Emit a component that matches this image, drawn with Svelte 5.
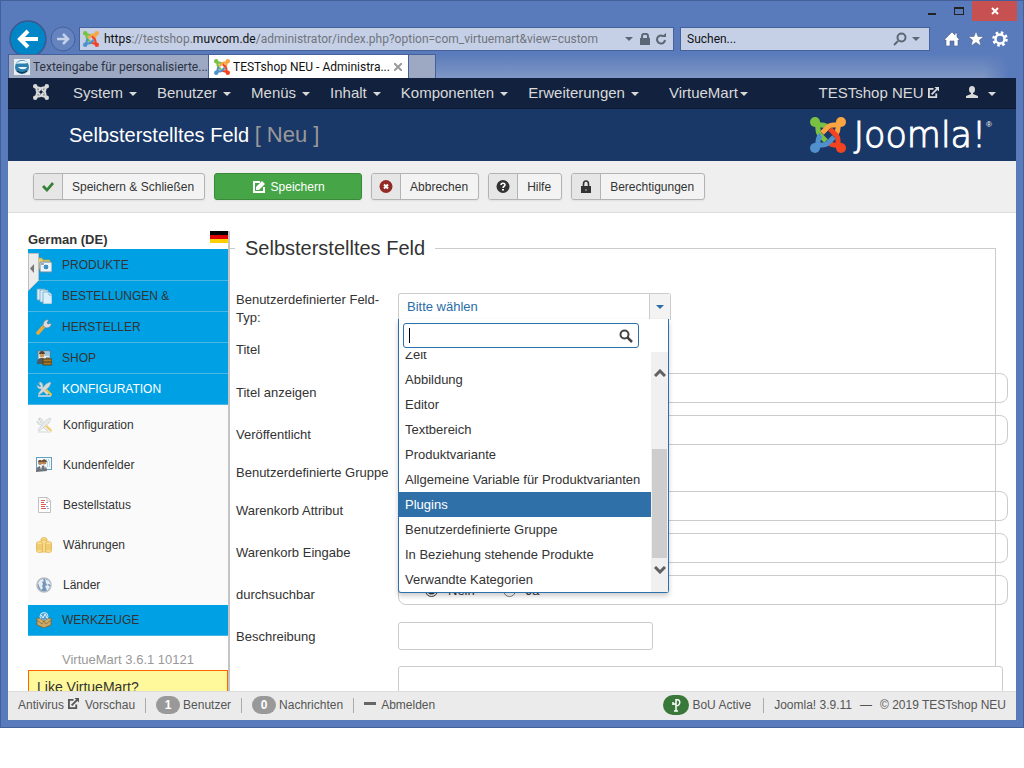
<script>
	let menu = ["System", "Benutzer", "Menüs", "Inhalt", "Komponenten", "Erweiterungen"];

	let sections = ["PRODUKTE", "BESTELLUNGEN &", "HERSTELLER", "SHOP", "KONFIGURATION"];
	let config = ["Konfiguration", "Kundenfelder", "Bestellstatus", "Währungen", "Länder"];

	let toolbar = [
		{ label: "Speichern & Schließen", icon: "check" },
		{ label: "Speichern", icon: "edit", primary: true },
		{ label: "Abbrechen", icon: "cancel" },
		{ label: "Hilfe", icon: "help" },
		{ label: "Berechtigungen", icon: "lock" }
	];

	let types = [
		"Zeit",
		"Abbildung",
		"Editor",
		"Textbereich",
		"Produktvariante",
		"Allgemeine Variable für Produktvarianten",
		"Plugins",
		"Benutzerdefinierte Gruppe",
		"In Beziehung stehende Produkte",
		"Verwandte Kategorien"
	];
	let active = $state("Plugins");

	let fields = [
		{ id: "title", label: "Titel", kind: "text" },
		{ id: "show_title", label: "Titel anzeigen", kind: "radio", value: "Ja" },
		{ id: "published", label: "Veröffentlicht", kind: "radio", value: "Ja" },
		{ id: "group", label: "Benutzerdefinierte Gruppe", kind: "select" },
		{ id: "cart_attribute", label: "Warenkorb Attribut", kind: "radio", value: "Nein" },
		{ id: "cart_input", label: "Warenkorb Eingabe", kind: "radio", value: "Nein" },
		{ id: "searchable", label: "durchsuchbar", kind: "radio", value: "Nein" },
		{ id: "description", label: "Beschreibung", kind: "text" }
	];
</script>

{#snippet joomla(size, colors)}
	<svg width={size} height={size} viewBox="0 0 36 36" fill="none" stroke-width="5" aria-hidden="true">
		{#each colors as color, i}
			<g transform="rotate({i * 90} 18 18)" stroke={color}>
				<path d="M6 6C10 10 14 6 18 11" />
				<path d="M6 6C10 10 6 14 10 18L16 24" />
				<circle cx="5" cy="5" r="5" fill={color} stroke="none" />
			</g>
		{/each}
	</svg>
{/snippet}

{#snippet external(size)}
	<svg width={size} height={size} viewBox="0 0 12 12" fill="none" stroke="currentColor" stroke-width="2" aria-hidden="true">
		<path d="M6 2H1v9h8V7" /><path d="M4 8l6-6" /><path d="M7 0h5v5z" fill="currentColor" stroke="none" />
	</svg>
{/snippet}

{#snippet toolIcon(name)}
	<svg width="14" height="14" viewBox="0 0 14 14" aria-hidden="true">
		{#if name === "check"}
			<path d="M1 7l2-2 3 3 5-6 2 2-7 8z" fill="#378137" />
		{:else if name === "edit"}
			<path d="M8 2H2v10h10V7" fill="none" stroke="#fff" stroke-width="2" />
			<path d="M4 10V7l6-6 3 3-6 6z" fill="#fff" />
		{:else if name === "cancel"}
			<circle cx="7" cy="6.500" r="6.500" fill="#942a25" />
			<path d="M5 4.500l4 4M9 4.500l-4 4" stroke="#fff" stroke-width="2" />
		{:else if name === "help"}
			<circle cx="7" cy="6.500" r="6.500" fill="#333" />
			<path d="M5 5c0-2.500 4-2.500 4 0C9 6.500 7 6 7 8" fill="none" stroke="#fff" stroke-width="1.500" />
			<rect x="6" y="9" width="2" height="1.500" fill="#fff" />
		{:else}
			<path d="M4.500 6V4c0-4 5-4 5 0v2" fill="none" stroke="#333" stroke-width="1.600" />
			<rect x="2" y="6" width="10" height="7" fill="#333" />
			<rect x="6.500" y="9" width="1" height="2" fill="#bbb" />
		{/if}
	</svg>
{/snippet}

{#snippet tools(metal)}
	<path d="M2 15h13" stroke="#d8dcdc" stroke-width="1.500" />
	<path d="M2 2l3 3-1 1-3-2c0 3 2 4 4 4l6 6 2-2-6-6c0-3-1-5-4-5l1 2z" fill={metal} stroke="#9aa3a3" stroke-width=".4" />
	<path d="M14 1l1 1-2 4-6 5-4 3-1-1 3-4 5-6z" fill={metal} stroke="#9aa3a3" stroke-width=".4" />
	<path d="M9 9l2-1 5 5c0 2-1 2-2 1z" fill="#eec23c" />
{/snippet}

{#snippet menuIcon(name)}
	<svg width="16" height="16" viewBox="0 0 16 16" aria-hidden="true">
		{#if name === "PRODUKTE"}
			<path d="M1 1h5l1 2h7v9H1z" fill="#e9cf6b" stroke="#b49a45" stroke-width=".7" />
			<rect x="4" y="5" width="12" height="10" rx="1" fill="#e8f3fa" stroke="#6b8ba0" />
			<circle cx="10" cy="10" r="3" fill="#3f92c8" stroke="#fff" /><path d="M5 7h3" stroke="#4b6675" />
		{:else if name === "BESTELLUNGEN &"}
			<g fill="#d9effa" stroke="#6fa5c4" stroke-width=".8">
				<path d="M1 1h8v11H1z" /><path d="M4 2h8v12H4z" /><path d="M7 4h6l3 3v9H7z" /><path d="M13 4v3h3" fill="#fff" />
			</g>
		{:else if name === "HERSTELLER"}
			<path d="M2 14l6-7" stroke="#e8a93b" stroke-width="3.500" stroke-linecap="round" />
			<path d="M7 7C7 3 9 0 13 1l-2 3 1 1 3-1c1 4-3 5-5 5z" fill="#d7dde0" stroke="#6c7a80" stroke-width=".7" />
		{:else if name === "SHOP"}
			<rect x="2" y="1" width="12" height="9" fill="#e7f3fa" stroke="#5c7f96" />
			<path d="M9 3h4M9 5h4" stroke="#4b9ccc" /><circle cx="6" cy="5" r="2.500" fill="#c99a61" /><path d="M3 4c0-4 6-4 6 0z" fill="#58402a" />
			<path d="M1 14c0-5 2-6 5-6s4 2 4 6z" fill="#4b585f" />
			<rect x="7" y="9" width="9" height="6" fill="#a5782b" stroke="#4e3812" stroke-width=".8" /><path d="M10 9V8h3v1M7 12h9" fill="none" stroke="#4e3812" />
		{:else if name === "KONFIGURATION"}
			{@render tools("#d5dbda")}
		{:else if name === "Konfiguration"}
			<g opacity=".75">{@render tools("#e2e5e5")}</g>
		{:else if name === "Kundenfelder"}
			<rect x=".5" y=".5" width="15" height="12" fill="#f4fafd" stroke="#62a0c0" />
			<path d="M8 3h6M11 5h3M11 7h3M11 9h3" stroke="#7fb5d1" stroke-dasharray="1 1" />
			<circle cx="4" cy="6" r="2" fill="#b98455" /><circle cx="8" cy="5" r="2.500" fill="#b98455" />
			<path d="M2 5c0-3 4-2 4-1 1-2 4-2 5 1" fill="#705138" />
			<path d="M0 15c0-4 2-6 5-6 2-1 6-1 6 5z" fill="#6d747a" /><path d="M4 9l1 4 1-4M8 8l1 4 1-4" fill="#fff" />
		{:else if name === "Bestellstatus"}
			<path d="M2.500.500h9l3 3v12h-12z" fill="#fff" stroke="#c0c0c0" /><path d="M11 1v3h3" fill="none" stroke="#c0c0c0" />
			<path d="M5 3.500h4M5 5.500h3M5 7.500h5M5 9.500h4M5 11.500h5" stroke="#e2574f" />
			<path d="M10 5.500h2M10 9.500h2M11 11.500h2" stroke="#88acd0" />
		{:else if name === "Währungen"}
			<g fill="#f8dc8d" stroke="#e2b14b" stroke-width=".8">
				<path d="M5 2c1-2 5-2 6 0v13H5z" /><path d="M.500 6c1-2 5-2 6 0v8c-1 2-5 2-6 0z" /><path d="M9.500 6c1-2 5-2 6 0v8c-1 2-5 2-6 0z" />
				<path d="M.500 8h6M.500 10h6M.500 12h6M9.500 8h6M9.500 10h6M9.500 12h6M5 3h6" />
			</g>
		{:else if name === "Länder"}
			<circle cx="8" cy="8" r="7" fill="#7495ba" stroke="#b6bdc5" stroke-width="1.500" />
			<path d="M2 6l2-3 3-1 1 2-2 1 1 2-1 2 1 2-2 2-2-4zM9 2l4 2 2 4-2-1-2 1-1-2zM9 9l3-1 2 2-3 4-1-3z" fill="#e6edf3" />
		{:else}
			<path d="M1 7l7 2 7-2v6l-7 3-7-3z" fill="#c9a765" stroke="#77592a" stroke-width=".7" />
			<circle cx="8" cy="4.500" r="4" fill="#4ba0d8" stroke="#d9edf8" /><path d="M5 3l2 3 2-4 2 4" fill="none" stroke="#e8f5fc" />
			<path d="M0 7l3-1 5 3-2 3zM16 7l-3-1-5 3 2 3z" fill="#cfae6c" stroke="#77592a" stroke-width=".6" />
		{/if}
	</svg>
{/snippet}

<div class="window">
	<header class="chrome">
		<div class="caption">
			<button class="cap" aria-label="Minimieren"><span class="min"></span></button>
			<button class="cap" aria-label="Maximieren"><span class="max"></span></button>
			<button class="cap close" aria-label="Schließen">
				<svg width="8" height="8" viewBox="0 0 8 8"><path d="M1 1l6 6M7 1L1 7" stroke="#fff" stroke-width="2" /></svg>
			</button>
		</div>
		<div class="address-row">
			<button class="back" aria-label="Zurück">
				<svg width="38" height="38" viewBox="0 0 38 38">
					<circle cx="19" cy="19" r="18" fill="#0086c6" stroke="#3d588f" stroke-width="1.500" />
					<path d="M29 19H12M19 11l-8 8 8 8" fill="none" stroke="#fff" stroke-width="4" />
				</svg>
			</button>
			<button class="forward" aria-label="Vorwärts">
				<svg width="26" height="26" viewBox="0 0 26 26">
					<circle cx="13" cy="13" r="12" fill="#6483bf" stroke="#45619b" />
					<path d="M7 13h10M13 8l5 5-5 5" fill="none" stroke="#c5d1e9" stroke-width="2.500" />
				</svg>
			</button>
			<div class="address">
				{@render joomla(16, ["#7ac143", "#f9a541", "#f44321", "#5091cd"])}
				<span class="url"><b>https</b>://testshop.<b>muvcom.de</b>/administrator/index.php?option=com_virtuemart&amp;view=custom</span>
				<span class="caret"></span>
				<svg width="10" height="12" viewBox="0 0 10 12"><path d="M2 6V3c0-3 6-3 6 0v3" fill="none" stroke="#5d6675" stroke-width="2" /><rect y="5" width="10" height="7" fill="#5d6675" /></svg>
				<svg width="12" height="12" viewBox="0 0 12 12"><path d="M10 7a4 4 0 1 1-2-4" fill="none" stroke="#5d6675" stroke-width="2" /><path d="M6 4h5V0z" fill="#5d6675" /></svg>
			</div>
			<div class="search">
				<input aria-label="Suchen" placeholder="Suchen..." />
				<svg width="14" height="14" viewBox="0 0 14 14" fill="none" stroke="#5d6675" stroke-width="2"><circle cx="8.500" cy="5.500" r="4" /><path d="M5 9l-4 4" /></svg>
				<span class="caret"></span>
			</div>
			<div class="chrome-icons">
				<svg width="16" height="16" viewBox="0 0 16 16"><path d="M8 1L0 9h2v6h4v-5h4v5h4V9h2l-3-3V2h-2v2z" fill="#fff" stroke="#4a5f8c" stroke-width=".6" /></svg>
				<svg width="16" height="16" viewBox="0 0 16 16"><path d="M8 0l2 5.500h6L11.500 9l1.500 6-5-3.500L3 15l1.500-6L0 5.500h6z" fill="#fff" stroke="#4a5f8c" stroke-width=".6" /></svg>
				<svg width="16" height="16" viewBox="0 0 16 16"><circle cx="8" cy="8" r="6.500" fill="none" stroke="#fff" stroke-width="2.500" stroke-dasharray="2.550" /><circle cx="8" cy="8" r="4.500" fill="none" stroke="#fff" stroke-width="2.500" /></svg>
			</div>
		</div>
		<div class="tabs">
			<button class="tab">
				<svg width="16" height="16" viewBox="0 0 16 16"><rect width="16" height="16" fill="#e8eef3" /><circle cx="8" cy="8" r="7" fill="#2d7fae" /><path d="M2 5c3-4 9-4 12-1-4 1-9 0-12 1zM4 8h9c-1 3-7 3-9 0z" fill="#e9f5fb" /><path d="M3 12c3 2 7 2 10 0" fill="none" stroke="#16384e" stroke-width="1.500" /></svg>
				<span>Texteingabe für personalisierte...</span>
			</button>
			<div class="tab current">
				{@render joomla(16, ["#7ac143", "#f9a541", "#f44321", "#5091cd"])}
				<span>TESTshop NEU - Administra...</span>
				<button class="tab-close" aria-label="Tab schließen">
					<svg width="8" height="8" viewBox="0 0 8 8"><path d="M0 0l8 8M8 0L0 8" stroke="#9a9a9a" stroke-width="2" /></svg>
				</button>
			</div>
			<button class="tab new" aria-label="Neuer Tab"></button>
			<div class="glow"></div>
		</div>
	</header>

	<div class="page">
		<nav class="navbar">
			<a href="#home" class="brand" aria-label="Joomla">{@render joomla(16, ["#d9d9d9", "#d9d9d9", "#d9d9d9", "#d9d9d9"])}</a>
			{#each menu as entry}
				<a href="#{entry}">{entry}<span class="caret"></span></a>
			{/each}
			<a href="#VirtueMart" class="vm">VirtueMart<span class="caret"></span></a>
			<a href="#site" class="site">TESTshop NEU {@render external(11)}</a>
			<a href="#user" aria-label="Benutzermenü">
				<svg width="12" height="12" viewBox="0 0 12 12" fill="currentColor"><ellipse cx="6" cy="3.500" rx="3" ry="3.500" /><path d="M5 6h2v2l5 2v2H0v-2l5-2z" /></svg>
				<span class="caret"></span>
			</a>
		</nav>

		<div class="title-bar">
			<h1>Selbsterstelltes Feld <small>[ Neu ]</small></h1>
			<div class="logo">
				{@render joomla(36, ["#7ac143", "#f9a541", "#f44321", "#5091cd"])}
				<span>Joomla!</span><sup>®</sup>
			</div>
		</div>

		<div class="toolbar">
			{#each toolbar as item}
				<button class="btn" class:primary={item.primary}>
					<span class="btn-icon">{@render toolIcon(item.icon)}</span>
					<span class="btn-text">{item.label}</span>
				</button>
			{/each}
		</div>

		<div class="content">
			<aside>
				<div class="language">
					<b>German (DE)</b>
					<span class="flag"><i></i><i></i><i></i></span>
				</div>
				<nav class="side">
					<button class="collapse" aria-label="Menü einklappen">
						<svg width="11" height="38" viewBox="0 0 11 38"><path d="M.5 .5h10v27l-10 10z" fill="#ececec" stroke="#bdbdbd" /><path d="M6 11v9l-4-4.500z" fill="#777" /></svg>
					</button>
					{#each sections as section}
						<a href="#{section}" class="section" class:open={section === "KONFIGURATION"}>{@render menuIcon(section)}{section}</a>
					{/each}
					{#each config as entry}
						<a href="#{entry}" class="entry">{@render menuIcon(entry)}{entry}</a>
					{/each}
					<a href="#WERKZEUGE" class="section">{@render menuIcon("WERKZEUGE")}WERKZEUGE</a>
				</nav>
				<p class="version">VirtueMart 3.6.1 10121</p>
				<div class="like">Like VirtueMart?</div>
			</aside>

			<fieldset>
				<legend>Selbsterstelltes Feld</legend>
				<div class="row">
					<span class="label" id="type-label">Benutzerdefinierter Feld-Typ:</span>
					<div class="chosen">
						<button class="chosen-single" aria-haspopup="listbox" aria-expanded="true" aria-labelledby="type-label">
							<span class="chosen-value">Bitte wählen</span>
							<span class="chosen-arrow"><span class="caret"></span></span>
						</button>
						<div class="chosen-drop">
							<div class="chosen-search">
								<span class="cursor"></span>
								<input aria-label="Feld-Typ suchen" />
								<svg width="14" height="14" viewBox="0 0 14 14" fill="none" stroke="#444" stroke-width="2"><circle cx="5.500" cy="5.500" r="4" /><path d="M8 8l5 5" stroke-width="2.500" /></svg>
							</div>
							<div class="chosen-results">
								<ul role="listbox" aria-labelledby="type-label">
									{#each types as type}
										<li role="option" aria-selected={type === active} class:highlighted={type === active} onmouseenter={() => (active = type)}>{type}</li>
									{/each}
								</ul>
								<div class="scrollbar">
									<svg width="12" height="8" viewBox="0 0 12 8"><path d="M1 7l5-5 5 5" fill="none" stroke="#606060" stroke-width="3" /></svg>
									<span class="thumb"></span>
									<svg width="12" height="8" viewBox="0 0 12 8"><path d="M1 1l5 5 5-5" fill="none" stroke="#606060" stroke-width="3" /></svg>
								</div>
							</div>
						</div>
					</div>
				</div>
				{#each fields as field}
					<div class="row {field.kind}">
						{#if field.kind === "radio"}
							<span class="label" id="{field.id}-label">{field.label}</span>
							<div class="radios" role="radiogroup" aria-labelledby="{field.id}-label">
								{#each ["Nein", "Ja"] as option}
									<label><input type="radio" name={field.id} value={option} checked={option === field.value} />{option}</label>
								{/each}
							</div>
						{:else}
							<label class="label" for={field.id}>{field.label}</label>
							{#if field.kind === "select"}
								<select id={field.id}><option></option></select>
							{:else}
								<input type="text" id={field.id} />
							{/if}
						{/if}
					</div>
				{/each}
				<div class="row">
					<span class="label"></span>
					<textarea aria-label="Text" rows="6"></textarea>
				</div>
			</fieldset>
		</div>

		<footer>
			<a href="#antivirus">Antivirus</a>
			<a href="#preview" class="preview">{@render external(11)}Vorschau</a>
			<i class="sep"></i>
			<a href="#users"><span class="badge">1</span>Benutzer</a>
			<i class="sep"></i>
			<a href="#messages"><span class="badge">0</span>Nachrichten</a>
			<i class="sep"></i>
			<a href="#logout"><span class="dash"></span>Abmelden</a>
			<a href="#bou" class="bou">
				<span class="badge green">
					<svg width="10" height="14" viewBox="0 0 10 14" fill="none" stroke="#fff" stroke-width="1.500"><path d="M5 1v12M2 6h3M2 4v3M5 2c5-2 5 6 0 6M3 13h4" /></svg>
				</span>BoU Active
			</a>
			<i class="sep"></i>
			<span class="copyright"><span>Joomla! 3.9.11</span><span>—</span><span>© 2019 TESTshop NEU</span></span>
		</footer>
	</div>
</div>

<style>
	:global(body) {
		background: #fff;
	}

	.window {
		box-sizing: border-box;
		height: calc(100vh - 40px);
		display: flex;
		flex-direction: column;
		padding: 0 7px 7px;
		border: 1px solid #44609a;
		background: #5a7bbb;
		font-family: "Liberation Sans", Arial, sans-serif;
		font-size: 13px;
		color: #333;
	}

	button {
		font: inherit;
		color: inherit;
		padding: 0;
		border: 0;
		background: none;
	}

	a {
		color: inherit;
		text-decoration: none;
	}

	svg {
		flex: none;
	}

	.caret {
		display: inline-block;
		border: 4px solid transparent;
		border-top-color: currentColor;
		border-bottom: 0;
	}

	/* browser frame */
	.chrome {
		flex: none;
		font-family: Roboto, "Noto Sans", sans-serif;
		font-size: 12px;
		color: #111;
	}

	.caption {
		display: flex;
		justify-content: flex-end;
		height: 26px;
		margin-right: -1px;
	}

	.cap {
		display: flex;
		justify-content: center;
		align-items: center;
		width: 27px;
		height: 20px;
	}

	.close {
		width: 45px;
		background: #c75050;
	}

	.min {
		width: 8px;
		height: 2px;
		margin-top: 6px;
		background: #222;
	}

	.max {
		width: 8px;
		height: 5px;
		border: 1px solid #222;
		border-top-width: 2px;
	}

	.address-row {
		display: flex;
		align-items: center;
		height: 24px;
	}

	.back, .forward {
		display: flex;
		margin-left: 1px;
	}

	.forward {
		margin: 0 3px;
	}

	.address, .search {
		box-sizing: border-box;
		display: flex;
		align-items: center;
		height: 24px;
		border: 1px solid #45619b;
		background: #c5d0e7;
		color: #5d6675;
	}

	.address {
		flex: 1;
		min-width: 0;
		gap: 5px;
		padding: 0 6px 0 3px;
	}

	.address .caret {
		margin-right: 2px;
	}

	.url {
		flex: 1;
		overflow: hidden;
		white-space: nowrap;
		color: #70747c;
	}

	.url b {
		font-weight: 400;
		color: #111;
	}

	.search {
		width: 250px;
		gap: 5px;
		margin: 0 14px 0 6px;
		padding: 0 9px 0 6px;
	}

	.search input {
		flex: 1;
		min-width: 0;
		padding: 0;
		border: 0;
		background: none;
		font: inherit;
	}

	.search input::placeholder {
		color: #111;
	}

	.chrome-icons {
		display: flex;
		gap: 8px;
		margin-right: 8px;
	}

	.tabs {
		position: relative;
		display: flex;
		height: 24px;
		margin-top: 3px;
	}

	.tab {
		box-sizing: border-box;
		display: flex;
		align-items: center;
		gap: 3px;
		width: 201px;
		padding: 0 0 0 5px;
		border: 1px solid #45619b;
		border-width: 1px 1px 0;
		background: #9da9c3;
		color: #2b3243;
		white-space: nowrap;
	}

	.tab span {
		flex: 1;
		text-align: left;
	}

	.current {
		width: 200px;
		border-left: 0;
		background: #fff;
		color: #111;
	}

	.tab-close {
		display: flex;
		padding: 2px 6px 2px 0;
	}

	.new {
		width: 27px;
		border-left: 0;
	}

	.glow {
		flex: 1;
		margin-right: 8px;
		background: linear-gradient(to left, #5a7bbb, transparent 24px), linear-gradient(#5a7bbb, #7f97c4);
	}

	/* joomla admin */
	.page {
		flex: 1;
		min-height: 0;
		display: flex;
		flex-direction: column;
		background: #fff;
	}

	.navbar {
		flex: none;
		display: flex;
		align-items: center;
		gap: 20px;
		height: 28px;
		padding: 0 20px 2px 25px;
		border-bottom: 1px solid #0c192e;
		background: #12223e;
		font-size: 15px;
		color: #d9d9d9;
		white-space: nowrap;
	}

	.navbar .caret {
		margin: 0 0 2px 6px;
	}

	.brand {
		display: flex;
		margin-right: 4px;
	}

	.vm {
		margin-left: 10px;
	}

	.navbar .vm .caret {
		margin-left: 2px;
	}

	.site {
		margin: 0 7px 0 auto;
	}

	.title-bar {
		flex: none;
		display: flex;
		align-items: center;
		justify-content: space-between;
		height: 52px;
		padding: 0 24px 0 61px;
		background: #1a3867;
		color: #fff;
	}

	h1 {
		margin: 0;
		font-size: 20px;
		font-weight: 400;
	}

	h1 small {
		font-size: 22px;
		color: #999;
	}

	.logo {
		display: flex;
		align-items: center;
	}

	.logo span {
		margin-left: 8px;
		font-family: "DejaVu Sans", sans-serif;
		font-size: 35px;
		font-weight: 200;
		line-height: 36px;
		-webkit-text-stroke: 1px #fff;
	}

	.logo sup {
		align-self: flex-start;
		font-size: 8px;
		line-height: 16px;
	}

	.toolbar {
		flex: none;
		display: flex;
		gap: 9px;
		padding: 12px 25px;
		border-bottom: 1px solid #ddd;
		background: #efefef;
	}

	.btn {
		display: flex;
		height: 27px;
		border: 1px solid #b3b3b3;
		border-radius: 3px;
		overflow: hidden;
		background: #f3f3f3;
		box-shadow: 0 1px 2px #0001;
		font-size: 12px;
		line-height: 27px;
		box-sizing: border-box;
	}

	.btn-icon {
		display: flex;
		align-items: center;
		padding: 0 7px;
		border-right: 1px solid #b3b3b3;
		background: #e6e6e6;
	}

	.btn-text {
		padding: 0 10px 0 9px;
	}

	.primary {
		justify-content: center;
		width: 148px;
		border-color: #3a8a3a;
		background: #46a546;
		color: #fff;
	}

	.primary .btn-icon {
		padding: 0;
		border: 0;
		background: none;
	}

	.primary .btn-text {
		padding: 0 0 0 5px;
	}

	.content {
		flex: 1;
		min-height: 0;
		display: flex;
		align-items: flex-start;
		padding: 18px 20px 0;
		overflow: hidden;
	}

	aside {
		flex: none;
		width: 200px;
		border-right: 2px solid #c4c4c4;
	}

	.language {
		display: flex;
		justify-content: space-between;
		height: 18px;
		line-height: 18px;
	}

	.flag {
		display: flex;
		flex-direction: column;
		width: 18px;
	}

	.flag i {
		height: 4px;
		background: #000;
	}

	.flag i:nth-child(2) {
		background: #d00;
	}

	.flag i:nth-child(3) {
		background: #ffce00;
	}

	.side {
		position: relative;
		border-top: 1px solid #00a1e4;
	}

	.collapse {
		position: absolute;
		left: 0;
		top: 3px;
		display: flex;
	}

	.section, .entry {
		box-sizing: border-box;
		display: flex;
		align-items: center;
		gap: 10px;
		height: 31px;
		padding-left: 8px;
		border-bottom: 1px solid #4db5e3;
		background: #00a1e4;
		font-size: 12px;
	}

	.open {
		color: #fff;
	}

	.entry {
		gap: 11px;
		height: 40px;
		border: 0;
		background: #fafafa;
	}

	.version {
		margin: 0;
		padding: 16px 0 2px 34px;
		line-height: 16px;
		color: #999;
	}

	.like {
		height: 60px;
		padding: 8px;
		border: 1px solid #f60;
		background: #fff99b;
		font-size: 14px;
	}

	fieldset {
		flex: 1;
		min-width: 0;
		margin: 0;
		padding: 16px 0 0 5px;
		border: 1px solid #ccc;
		border-left: 0;
	}

	legend {
		padding: 0 10px;
		font-size: 20px;
		line-height: 34px;
	}

	.row {
		display: flex;
		align-items: flex-start;
		min-height: 42px;
	}

	.label {
		flex: none;
		width: 163px;
		padding: 11px 0 0 1px;
		box-sizing: border-box;
		line-height: 18px;
	}

	.row:first-of-type {
		min-height: 49px;
	}

	.row:first-of-type .label {
		padding: 10px 15px 0 1px;
	}

	.text {
		min-height: 43px;
	}

	.text:nth-last-of-type(2) {
		min-height: 49px;
	}

	.select {
		min-height: 34px;
	}

	.select .label {
		padding-top: 7px;
	}

	input[type="text"], select {
		box-sizing: border-box;
		width: 255px;
		height: 28px;
		margin: 5px 0 0;
		border: 1px solid #ccc;
		border-radius: 3px;
		background: #fff;
	}

	select {
		height: 24px;
	}

	.radios {
		flex: 1;
		box-sizing: border-box;
		display: flex;
		align-items: center;
		gap: 28px;
		height: 30px;
		margin-right: -13px;
		padding-left: 26px;
		border: 1px solid #ccc;
		border-radius: 8px;
	}

	.radios label {
		display: flex;
		align-items: center;
		gap: 10px;
	}

	.radios input {
		width: 13px;
		height: 13px;
		margin: 0;
		accent-color: #333;
	}

	textarea {
		flex: 1;
		margin: 0 -8px 0 0;
		border: 1px solid #ccc;
		border-radius: 3px;
		resize: none;
	}

	.chosen {
		position: relative;
		width: 273px;
		margin-top: 12px;
	}

	.chosen-single {
		box-sizing: border-box;
		display: flex;
		width: 100%;
		height: 27px;
		border: 1px solid #ccc;
		border-bottom: 0;
		border-radius: 3px 3px 0 0;
		color: #2a6da8;
		line-height: 26px;
	}

	.chosen-value {
		flex: 1;
		padding-left: 8px;
		text-align: left;
	}

	.chosen-arrow {
		display: flex;
		justify-content: center;
		align-items: center;
		width: 20px;
		border-left: 1px solid #ccc;
		background: #f3f3f3;
	}

	.chosen-drop {
		position: absolute;
		z-index: 1;
		top: 26px;
		left: 0;
		right: 2px;
		border: 1px solid #2d70ae;
		border-top: 0;
		border-radius: 0 0 3px 3px;
		background: #fff;
		box-shadow: 0 3px 5px #0003;
	}

	.chosen-search {
		display: flex;
		align-items: center;
		height: 23px;
		margin: 4px 29px 4px 4px;
		padding: 0 5px;
		border: 1px solid #2d70ae;
		border-radius: 3px;
	}

	.chosen-search input {
		flex: 1;
		min-width: 0;
		padding: 0;
		border: 0;
		outline: 0;
	}

	.cursor {
		width: 1px;
		height: 15px;
		background: #000;
	}

	.chosen-results {
		display: flex;
		height: 240px;
	}

	.chosen-results ul {
		flex: 1;
		display: flex;
		flex-direction: column;
		justify-content: flex-end;
		margin: 0;
		padding: 0;
		overflow: hidden;
		list-style: none;
	}

	.chosen-results li {
		flex: none;
		padding-left: 6px;
		line-height: 25px;
		white-space: nowrap;
	}

	.highlighted {
		background: #2f70a9;
		color: #fff;
	}

	.scrollbar {
		display: flex;
		flex-direction: column;
		align-items: center;
		justify-content: flex-end;
		gap: 8px;
		width: 17px;
		padding-bottom: 18px;
		box-sizing: border-box;
		background: #f0f0f0;
	}

	.scrollbar svg:first-child {
		margin-bottom: 64px;
	}

	.thumb {
		width: 15px;
		height: 109px;
		background: #cdcdcd;
	}

	footer {
		flex: none;
		display: flex;
		align-items: center;
		height: 26px;
		padding: 0 10px 2px;
		border-top: 1px solid #ddd;
		background: #ebebeb;
		font-size: 12px;
		color: #555;
		white-space: nowrap;
	}

	.preview {
		display: flex;
		gap: 6px;
		margin-left: 4px;
	}

	.sep {
		width: 1px;
		height: 15px;
		margin: 0 10px;
		background: #aaa;
	}

	.badge {
		display: inline-flex;
		justify-content: center;
		align-items: center;
		width: 24px;
		height: 18px;
		margin-right: 3px;
		border-radius: 9px;
		background: #999;
		color: #fff;
		font-weight: 700;
	}

	.green {
		width: 26px;
		height: 20px;
		border-radius: 10px;
		background: #3a783a;
	}

	.dash {
		display: inline-block;
		width: 12px;
		height: 3px;
		margin: 0 5px 4px 0;
		background: #666;
		vertical-align: middle;
	}

	.bou {
		display: flex;
		align-items: center;
		margin: 0 2px 0 auto;
	}

	.copyright {
		display: flex;
		gap: 8px;
	}
</style>
